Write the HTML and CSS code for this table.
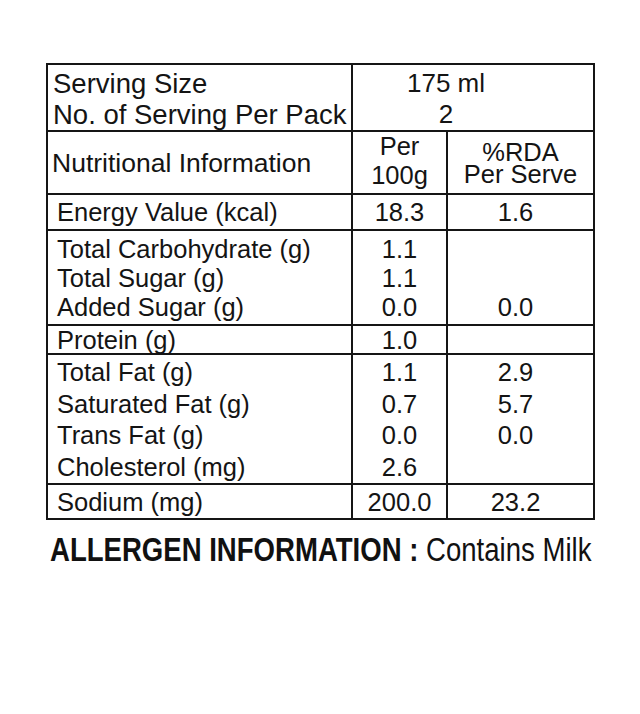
FILE: index.html
```html
<!DOCTYPE html>
<html>
<head>
<meta charset="utf-8">
<link rel="stylesheet" href="styles.css">
</head>
<body>
<div class="page">
<table class="nutri">
<colgroup><col class="c1"><col class="c2"><col class="c3"></colgroup>
<tr class="r-serv">
<td class="lbl lbl-serv">Serving Size<br>No. of Serving Per Pack</td>
<td colspan="2" class="val val-serv">175 ml<br>2</td>
</tr>
<tr class="r-head">
<td class="lbl lbl-head">Nutritional Information</td>
<td class="val head-per">Per<br>100g</td>
<td class="val head-rda">%RDA<br>Per Serve</td>
</tr>
<tr class="r-energy">
<td class="lbl">Energy Value (kcal)</td>
<td class="val">18.3</td>
<td class="val rda">1.6</td>
</tr>
<tr class="r-carb">
<td class="lbl grp3">Total Carbohydrate (g)<br>Total Sugar (g)<br>Added Sugar (g)</td>
<td class="val grp3">1.1<br>1.1<br>0.0</td>
<td class="val rda grp3"><br><br>0.0</td>
</tr>
<tr class="r-prot">
<td class="lbl">Protein (g)</td>
<td class="val">1.0</td>
<td class="val rda"></td>
</tr>
<tr class="r-fat">
<td class="lbl grp4">Total Fat (g)<br>Saturated Fat (g)<br>Trans Fat (g)<br>Cholesterol (mg)</td>
<td class="val grp4">1.1<br>0.7<br>0.0<br>2.6</td>
<td class="val rda grp4">2.9<br>5.7<br>0.0<br><br></td>
</tr>
<tr class="r-sod">
<td class="lbl">Sodium (mg)</td>
<td class="val">200.0</td>
<td class="val rda">23.2</td>
</tr>
</table>
<p class="allergen"><span class="allergen-inner"><span class="allergen-key">ALLERGEN INFORMATION :</span> <span class="allergen-val">Contains Milk</span></span></p>
</div>
</body>
</html>
```

FILE: styles.css
```css
html, body {
  margin: 0;
  padding: 0;
  background: #ffffff;
}
.page {
  width: 640px;
  height: 714px;
  padding: 63px 0 0 46px;
  box-sizing: border-box;
  overflow: hidden;
  font-family: "Liberation Sans", Arial, sans-serif;
  color: #141414;
}
.nutri {
  border-collapse: collapse;
  table-layout: fixed;
  width: 549px;
  font-size: 25.5px;
}
.c1 { width: 305px; }
.c2 { width: 95px; }
.c3 { width: 147px; }
.nutri td {
  border: 2px solid #151515;
  padding: 0;
  line-height: 30px;
  vertical-align: middle;
  white-space: nowrap;
}
.lbl { padding-left: 9px !important; text-align: left; }
.val { text-align: center; }
.rda { padding-right: 10px !important; }

.r-serv td { height: 62px; vertical-align: top; padding-top: 3px; line-height: 31px; }
.lbl-serv { padding-left: 5px !important; font-size: 27.5px; }
.val-serv { padding-right: 54px !important; font-size: 26px; }

.r-head td { height: 59px; }
.r-head .head-per { line-height: 29px; padding-bottom: 3px; height: 56px; }
.lbl-head { padding-left: 4px !important; font-size: 26.5px; }
.head-rda { line-height: 22px !important; padding-right: 4px; }

.r-energy td { height: 34px; }
.r-carb td { height: 89px; }
.grp3 { vertical-align: top !important; padding-top: 4px !important; line-height: 29px !important; }
.r-prot td { height: 26px; line-height: 26px; padding-top: 1px; }
.r-fat td { height: 126px; }
.grp4 { vertical-align: top !important; padding-top: 2px !important; line-height: 31.5px !important; }
.r-sod td { height: 33px; }

.allergen {
  margin: 10px 0 0 4px;
  font-size: 33px;
  line-height: 40px;
  color: #111;
  white-space: nowrap;
}
.allergen-inner {
  display: inline-block;
  transform: scaleX(0.835);
  transform-origin: left center;
}
.allergen-key { font-weight: bold; }
```
